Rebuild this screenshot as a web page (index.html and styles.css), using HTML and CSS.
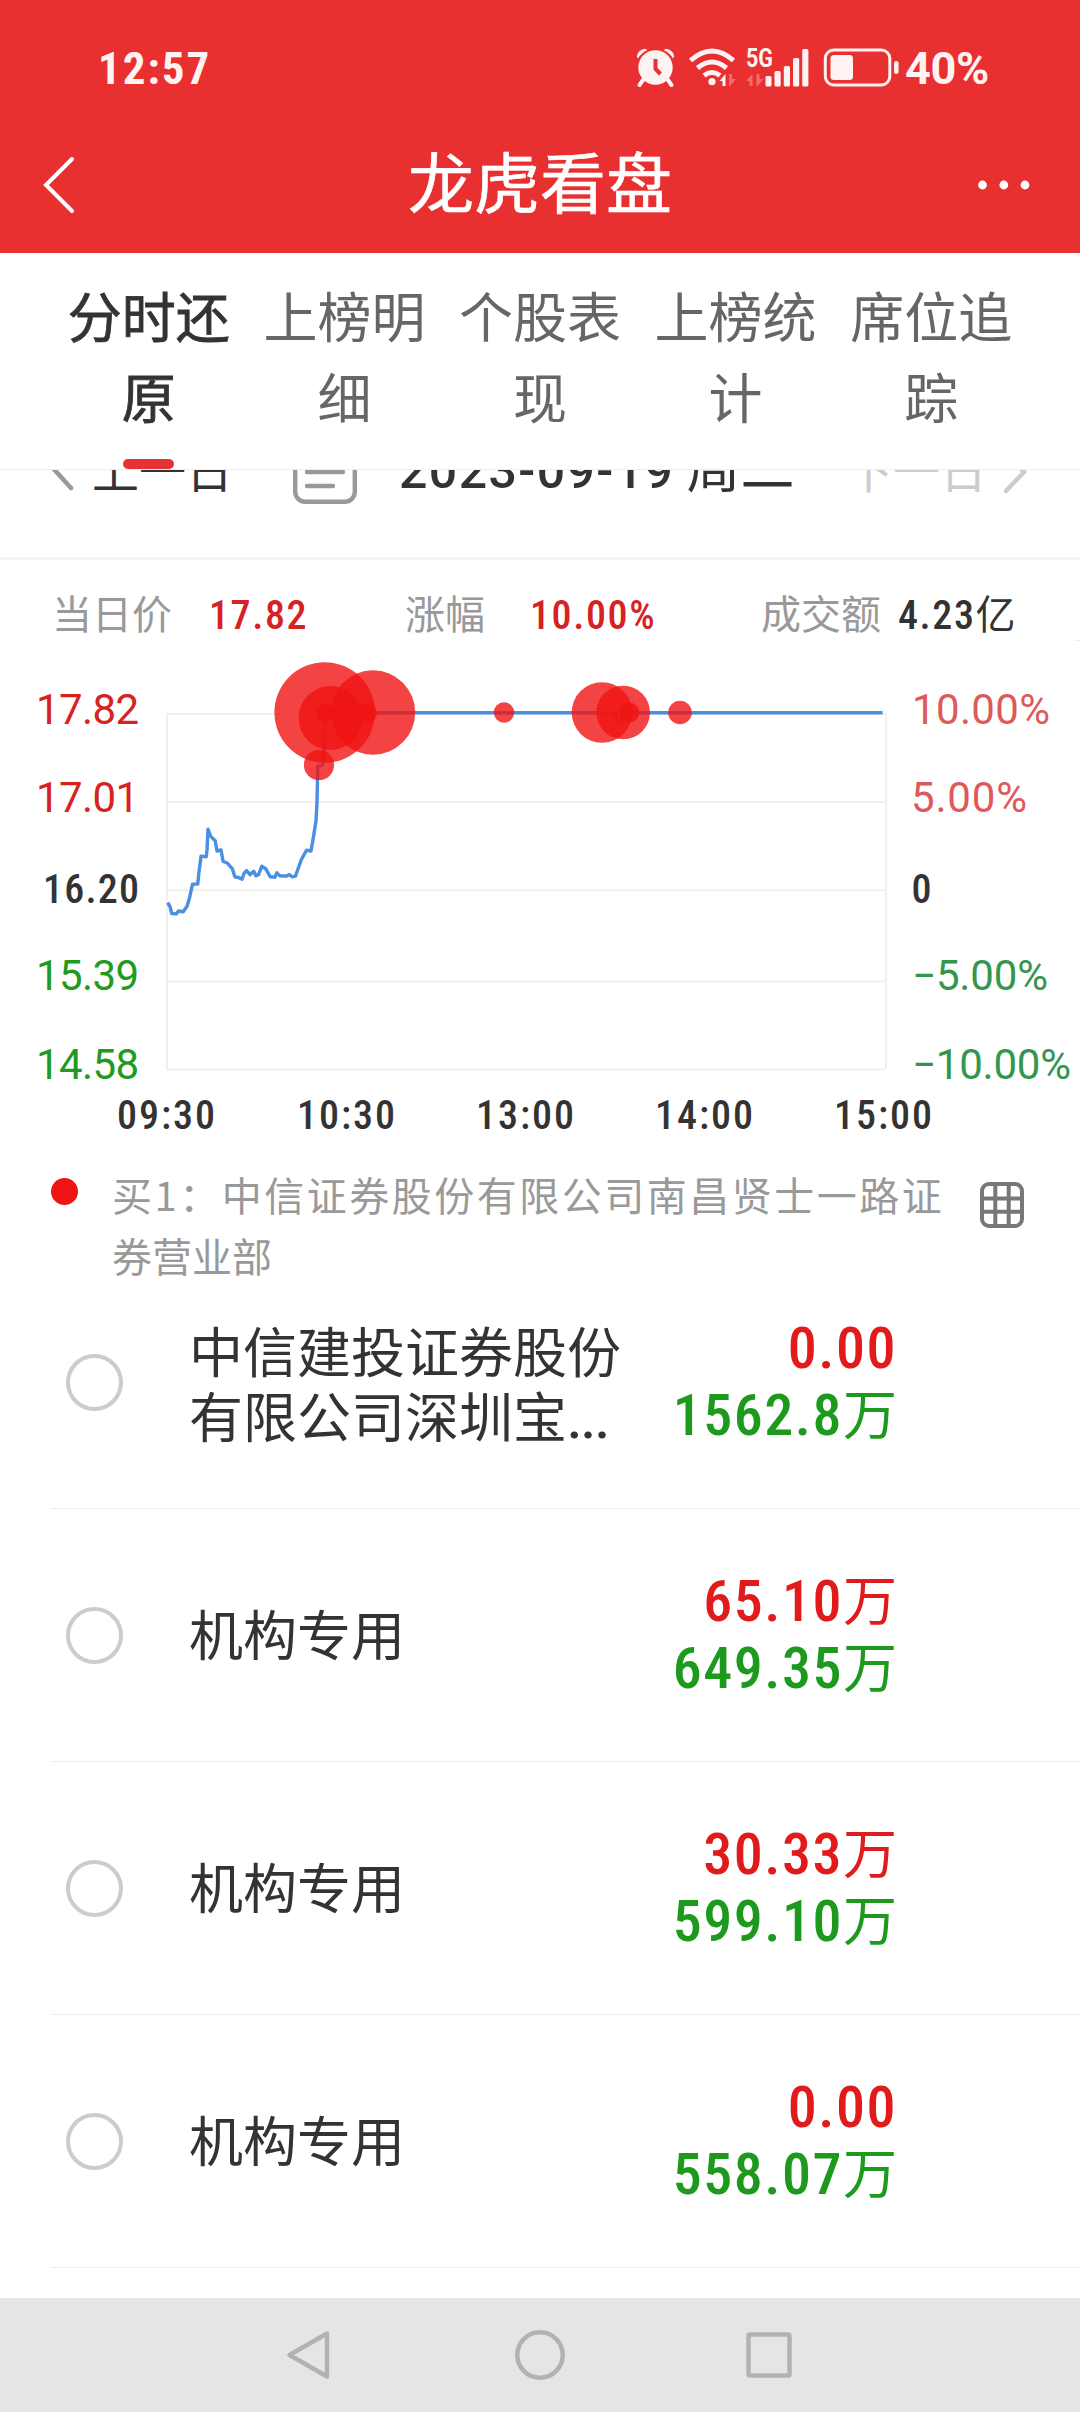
FILE: index.html
```html
<!DOCTYPE html>
<html lang="zh-CN">
<head>
<meta charset="utf-8">
<title>龙虎看盘</title>
<link rel="stylesheet" href="styles.css">
</head>
<body>
<div class="app">
  <header class="header">
    <div class="status">
      <span class="status-time">12:57</span>
      <svg class="status-icons" viewBox="630 40 275 54" width="275" height="54">
        <g fill="#fff2f2">
          <circle cx="655.500" cy="67.500" r="17.200"/>
          <path d="M637 57q0-7 8-8.300l2.500 1.300q-6 2.500-9.500 8.500zM674 57q0-7-8-8.300l-2.500 1.300q6 2.500 9.500 8.500z"/>
          <path d="M643 80l-3.500 5M668 80l3.500 5" stroke="#fff2f2" stroke-width="4" stroke-linecap="round"/>
          <path d="M655.500 59v10l5 5" fill="none" stroke="#e83030" stroke-width="4"/>
        </g>
        <g fill="none" stroke="#fff2f2" stroke-width="5">
          <path d="M690.500 60.500q21.500-19 43 0M697.500 68q14.500-12 29 0M704 75.500q8-6 16 0"/>
        </g>
        <circle cx="712" cy="81.700" r="3.600" fill="#fff2f2"/>
        <path d="M725.500 86V74l-6 7h3v5z" fill="#fff2f2"/>
        <path d="M729 74h3v5h4l-6 7h-1zM752.500 86V74l-6.500 7h3.500v5zM756.500 74h3v5h4l-6 7h-1z" fill="#f56b6b"/>
        <text class="net-label" x="746" y="67" textLength="27" lengthAdjust="spacingAndGlyphs">5G</text>
        <g fill="#fff2f2">
          <rect x="765.500" y="76" width="6" height="10.500" rx="1.500"/>
          <rect x="774.500" y="71" width="6.200" height="15.500" rx="1.500"/>
          <rect x="783.800" y="66" width="6.200" height="20.500" rx="1.500"/>
          <rect x="793" y="58" width="6.200" height="28.500" rx="1.500"/>
          <rect x="802.200" y="49" width="6.200" height="37.500" rx="1.500"/>
          <rect x="830.500" y="55" width="22.500" height="25" rx="3.500"/>
          <rect x="894" y="61" width="4.600" height="13" rx="2.300"/>
        </g>
        <rect x="825.300" y="50" width="64.500" height="35" rx="8.500" fill="none" stroke="#fff2f2" stroke-width="3"/>
      </svg>
      <span class="status-battery">40%</span>
    </div>
    <nav class="titlebar">
      <svg class="back" viewBox="0 0 36 64" width="36" height="64"><path d="M32 6L6 32l26 26" fill="none" stroke="#fff" stroke-width="4" stroke-linecap="round"/></svg>
      <h1 class="title">龙虎看盘</h1>
      <svg class="more" viewBox="0 0 54 12" width="54" height="12"><g fill="#fff"><circle cx="5.500" cy="6" r="4.400"/><circle cx="26.800" cy="6" r="4.400"/><circle cx="48" cy="6" r="4.400"/></g></svg>
    </nav>
  </header>

  <nav class="tabs">
    <a class="tab tab-active">分时还原</a>
    <a class="tab">上榜明细</a>
    <a class="tab">个股表现</a>
    <a class="tab">上榜统计</a>
    <a class="tab">席位追踪</a>
  </nav>

  <section class="dates">
    <div class="dates-row">
      <svg class="prev-arrow" viewBox="0 0 30 48" width="30" height="48"><path d="M24 3L4 25l20 22" transform="translate(0 -3)" fill="none" stroke="#999" stroke-width="4.500" stroke-linecap="round"/></svg>
      <span class="prev-day">上一日</span>
      <svg class="doc" viewBox="0 0 64 66" width="64" height="66"><g fill="none" stroke="#999" stroke-width="4.400" stroke-linecap="round"><rect x="2.200" y="2.200" width="59.600" height="61.600" rx="10"/><path d="M14 20h36M14 34h36M14 48h26"/></g></svg>
      <span class="date"><span class="num">2023-09-19</span> 周二</span>
      <span class="next-day">下一日</span>
      <svg class="next-arrow" viewBox="0 0 26 48" width="26" height="48"><path d="M4 5l18 19L4 43" fill="none" stroke="#ccc" stroke-width="4.500" stroke-linecap="round"/></svg>
    </div>
  </section>

  <section class="stats">
    <span class="stat-label">当日价</span><span class="num red">17.82</span>
    <span class="stat-label">涨幅</span><span class="num red">10.00%</span>
    <span class="stat-label">成交额</span><span class="amount"><span class="num">4.23</span>亿</span>
  </section>

  <svg class="chart" viewBox="0 640 1080 510" width="1080" height="510">
    <path d="M1075 640.500h5" stroke="#eee" stroke-width="1"/>
    <g stroke="#f0f0f0" stroke-width="2" fill="none">
      <path d="M166 714H886M166 802H885M166 890.300H886M166 981.500H885M166 1069.500H885M167 713V1069M886 713V1069"/>
    </g>
    <path d="M167.700 902.600L170 906.600L171.800 913.500L176.300 913.900L178.400 911L183.200 911.700L187 906.200L189.700 897.200L192.500 884.100L197.700 884.100L199 871.700L201.100 856.100L206.300 856.800L207 849.900L208 829.200L210.700 836.400L215.200 840.800L217 851L221 849.900L223.100 861.500L227.300 863L232.400 868.800L234.800 876.800L238.600 877.500L242 879.300L244.100 873.200L246.600 870.600L250 874.600L253.800 871.300L255.900 875.700L258.600 874.600L261.700 866.300L265.800 868.800L270.300 876.800L274.800 877.200L276.900 872.800L279.600 875.700L286.500 876L289.300 874.600L292 876.800L295.500 876L301.300 859.700L306.500 850.300L311 851L313.400 837.200L316 820.800L317 802.600L317.800 766.300L322.700 764.800L324 751.800L325 719L327 712.800H614.500L617 723L621 723L623 712.800H882.600" fill="none" stroke="#4a8fe2" stroke-width="3.400" stroke-linejoin="round"/>
    <g fill="#f01414" fill-opacity=".8">
      <circle cx="324.700" cy="712.500" r="50.300"/><circle cx="373" cy="712.500" r="42.200"/><circle cx="330.600" cy="718" r="32"/>
      <circle cx="319" cy="765" r="15.100"/><circle cx="325" cy="713" r="9"/><circle cx="367" cy="713" r="10"/>
      <circle cx="504" cy="712.500" r="10.200"/><circle cx="602" cy="712.500" r="30.300"/><circle cx="623.200" cy="712.500" r="26.800"/>
      <circle cx="629.500" cy="712.500" r="9.900"/><circle cx="680" cy="712.500" r="11.800"/>
    </g>
    <g class="axis">
      <g class="axis-up">
        <text x="36" y="724" textLength="103" lengthAdjust="spacing">17.82</text>
        <text x="36" y="812" textLength="103" lengthAdjust="spacing">17.01</text>
      </g>
      <text class="axis-mid" x="43" y="903" textLength="96" lengthAdjust="spacing">16.20</text>
      <g class="axis-down">
        <text x="36" y="989.800" textLength="103" lengthAdjust="spacing">15.39</text>
        <text x="36" y="1078.500" textLength="103" lengthAdjust="spacing">14.58</text>
      </g>
      <g class="axis-up-pct">
        <text x="912" y="724" textLength="138" lengthAdjust="spacing">10.00%</text>
        <text x="911" y="812" textLength="116" lengthAdjust="spacing">5.00%</text>
      </g>
      <text class="axis-mid" x="911.500" y="903">0</text>
      <g class="axis-down-pct">
        <text x="912" y="989.800" textLength="136" lengthAdjust="spacing">−5.00%</text>
        <text x="912" y="1078.500" textLength="159" lengthAdjust="spacing">−10.00%</text>
      </g>
      <g class="axis-mid">
        <text x="117" y="1128.700" textLength="98" lengthAdjust="spacing">09:30</text>
        <text x="297" y="1128.700" textLength="98" lengthAdjust="spacing">10:30</text>
        <text x="476" y="1128.700" textLength="98" lengthAdjust="spacing">13:00</text>
        <text x="655" y="1128.700" textLength="98" lengthAdjust="spacing">14:00</text>
        <text x="834" y="1128.700" textLength="98" lengthAdjust="spacing">15:00</text>
      </g>
    </g>
  </svg>

  <section class="legend">
    <i class="legend-dot"></i>
    <p class="legend-text"><span class="legend-first">买1：中信证券股份有限公司南昌贤士一路证</span>券营业部</p>
    <svg class="grid-icon" viewBox="0 0 44 46" width="44" height="46"><g fill="none" stroke="#777" stroke-width="4"><rect x="2" y="2" width="40" height="42" rx="7"/><path d="M15.300 2v42M28.700 2v42M2 16.500h40M2 29.800h40"/></g></svg>
  </section>

  <ul class="list">
    <li class="row"><i class="radio"></i><span class="name name-long">中信建投证券股份有限公司深圳宝<span class="num">...</span></span><span class="vals"><span class="buy"><span class="num">0.00</span></span><span class="sell"><span class="num">1562.8</span>万</span></span></li>
    <li class="row"><i class="radio"></i><span class="name">机构专用</span><span class="vals"><span class="buy"><span class="num">65.10</span>万</span><span class="sell"><span class="num">649.35</span>万</span></span></li>
    <li class="row"><i class="radio"></i><span class="name">机构专用</span><span class="vals"><span class="buy"><span class="num">30.33</span>万</span><span class="sell"><span class="num">599.10</span>万</span></span></li>
    <li class="row"><i class="radio"></i><span class="name">机构专用</span><span class="vals"><span class="buy"><span class="num">0.00</span></span><span class="sell"><span class="num">558.07</span>万</span></span></li>
  </ul>

  <footer class="navbar">
    <svg viewBox="0 0 52 52" width="52" height="52"><path d="M42 4.500v43L4.500 26z"/></svg>
    <svg viewBox="0 0 52 52" width="52" height="52"><circle cx="26" cy="26" r="22.700"/></svg>
    <svg viewBox="0 0 52 52" width="52" height="52"><rect x="5.500" y="5.500" width="41" height="41" rx="1.500"/></svg>
  </footer>
</div>
</body>
</html>
```
FILE: styles.css
```css
* { box-sizing: border-box; }
body {
  margin: 0;
  background: #fff;
  color: #333;
  font-family: "Noto Sans CJK SC", sans-serif;
}
.app {
  display: flex;
  flex-direction: column;
  width: 1080px;
  height: 2412px;
  overflow: hidden;
}
.num { font-family: Roboto, sans-serif; font-weight: 500; font-stretch: 75%; }
.red { color: #d62222; }

.header { height: 253px; background: #e83030; color: #fff; }
.status {
  display: flex;
  align-items: center;
  height: 136px;
  padding-left: 98px;
  color: #fff2f2;
  font: 700 45px/1 Roboto, sans-serif;
}
.status-icons { position: relative; top: -1px; }
.status-time { width: 532px; font-stretch: 75%; letter-spacing: 2px; }
.net-label { font: 700 25px Roboto, sans-serif; fill: #fff2f2; }
.status-battery { letter-spacing: -.3px; }
.titlebar {
  display: grid;
  grid-template-columns: 1fr auto 1fr;
  align-items: center;
  height: 98px;
  padding: 0 49px 0 40px;
}
.more { justify-self: end; }
.title { margin: -13px 0 0 9px; font-weight: 400; font-size: 66px; line-height: 96px; -webkit-text-stroke: .6px #fff; }

.tabs {
  display: grid;
  grid-template-columns: repeat(5, 1fr);
  height: 217px;
  padding: 21px 51px 0;
  border-bottom: 1px solid #eee;
}
.tab {
  display: flex;
  flex-direction: column;
  align-items: center;
  padding: 0 16px;
  text-align: center;
  color: #666;
  font-size: 54px;
  line-height: 81px;
}
.tab-active { color: #333; -webkit-text-stroke: .8px #333; }
.tab-active::after {
  content: "";
  width: 51px;
  height: 10px;
  margin-top: 23px;
  border-radius: 5px;
  background: #e63232;
}

.dates { height: 90px; overflow: hidden; border-bottom: 3px solid #f3f3f3; }
.dates-row {
  display: flex;
  align-items: center;
  height: 72px;
  margin-top: -38px;
  padding-left: 47px;
  font-size: 47px;
  line-height: 72px;
  white-space: nowrap;
}
.prev-day { width: 141px; margin-left: 15px; }
.doc { margin: 6px 0 0 60px; }
.date { width: 392px; margin-left: 42px; font-size: 54px; }
.date .num { font-size: 50px; font-stretch: 100%; letter-spacing: 1.400px; }
.next-day { margin-left: 55px; color: #ccc; }
.next-arrow { margin: 8px 0 0 15px; }

.stats {
  display: grid;
  grid-template-columns: 157px 196px 125px 231px 137px auto;
  align-items: baseline;
  height: 80px;
  padding: 23px 0 0 52px;
  font-size: 40px;
  line-height: 58px;
  white-space: nowrap;
}
.stats .num { letter-spacing: 1.600px; }
.stat-label { color: #999; }

.chart { flex: none; display: block; }
.axis { font: 400 42px Roboto, sans-serif; }
.axis-mid { font-size: 40px; font-weight: 500; font-stretch: 75%; fill: #333; }
.axis-up { fill: #d62222; }
.axis-down { fill: #219a21; }
.axis-up-pct { fill: #de5a5a; }
.axis-down-pct { fill: #33964d; }

.legend {
  display: flex;
  align-items: flex-start;
  height: 106px;
  padding: 14px 56px 0 51px;
}
.legend-dot { width: 27px; height: 27px; margin-top: 14px; border-radius: 50%; background: #f01414; }
.legend-text { flex: 1; margin: 0 0 0 34px; color: #999; font-size: 40px; line-height: 61px; white-space: nowrap; }
.legend-first { display: block; letter-spacing: 2.500px; }
.grid-icon { margin-top: 18px; }

.list { flex: 1; margin: 0; padding: 0; list-style: none; }
.row {
  display: flex;
  align-items: center;
  height: 253px;
  margin-left: 51px;
  padding: 0 183px 0 15px;
  border-bottom: 1px solid #eee;
}
.radio { width: 57px; height: 57px; border: 4px solid #ccc; border-radius: 50%; }
.name { width: 440px; margin: -6px 0 0 66px; font-size: 54px; line-height: 65px; }
.name-long { margin-top: 5px; }
.name .num { letter-spacing: -1.200px; }
.vals { flex: 1; display: flex; flex-direction: column; align-items: flex-end; margin-top: -8px; font-size: 54px; line-height: 67px; white-space: nowrap; }
.vals .num { font-size: 58px; line-height: 60px; letter-spacing: 1.500px; }
.buy { color: #e11b1b; }
.sell { color: #1d9a1d; }

.navbar {
  display: flex;
  align-items: center;
  justify-content: space-between;
  height: 114px;
  padding: 0 285px 0 285px;
  background: #e5e5e5;
}
.navbar svg { fill: none; stroke: #b2b2b2; stroke-width: 4.500; stroke-linejoin: round; }
```
